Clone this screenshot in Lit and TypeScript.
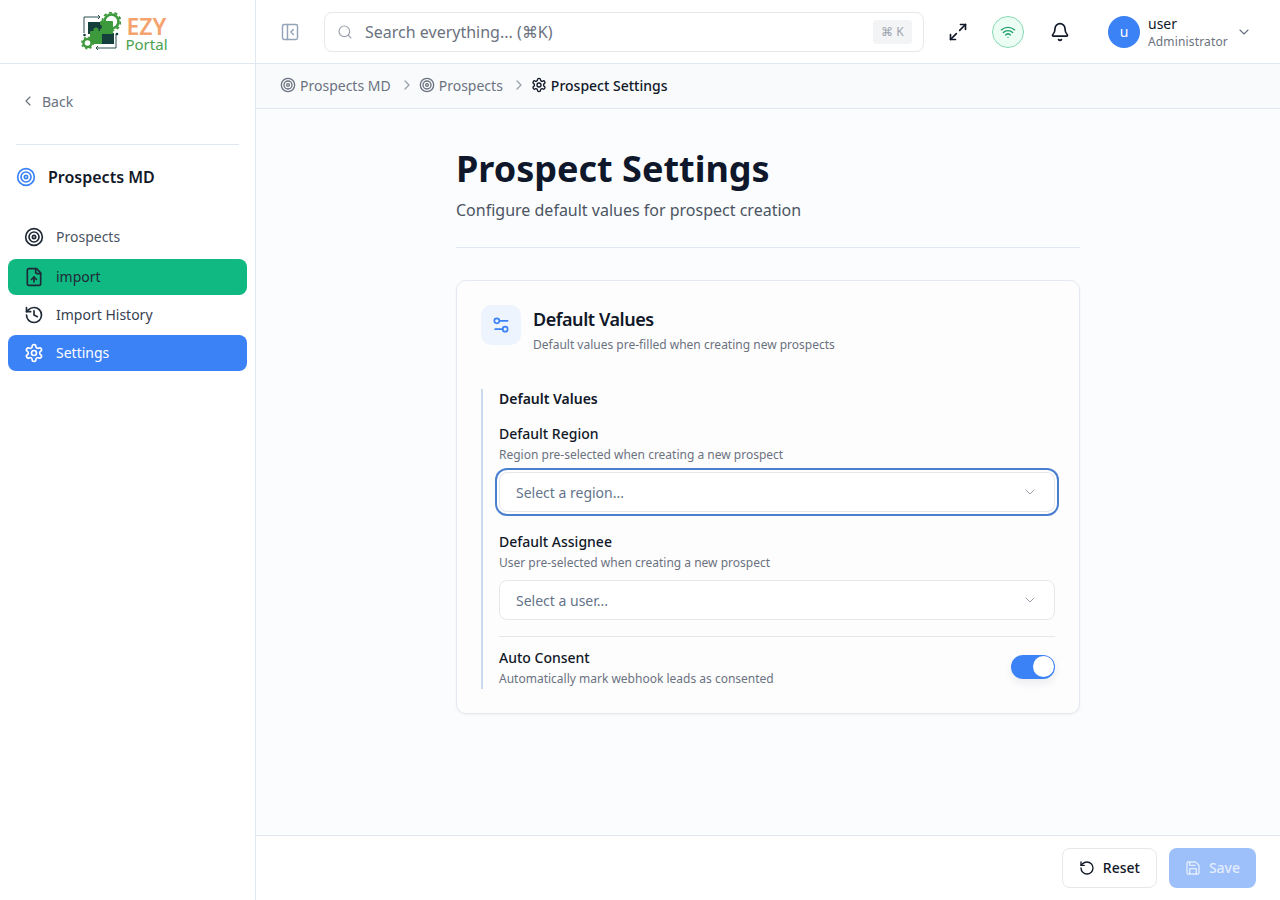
import { LitElement, html, svg, css } from 'lit';
import { customElement, state } from 'lit/decorators.js';

// lucide style icons, body only
const ICONS: Record<string, unknown> = {
  back: svg`<path d="m15 18-6-6 6-6"/>`,
  right: svg`<path d="m9 18 6-6-6-6"/>`,
  down: svg`<path d="m6 9 6 6 6-6"/>`,
  target: svg`<circle cx="12" cy="12" r="10"/><circle cx="12" cy="12" r="6"/><circle cx="12" cy="12" r="2"/>`,
  fileUp: svg`<path d="M15 2H6a2 2 0 0 0-2 2v16a2 2 0 0 0 2 2h12a2 2 0 0 0 2-2V7Z"/><path d="M14 2v4a2 2 0 0 0 2 2h4"/><path d="M12 12v6"/><path d="m15 15-3-3-3 3"/>`,
  history: svg`<path d="M3 12a9 9 0 1 0 9-9 9.75 9.75 0 0 0-6.74 2.74L3 8"/><path d="M3 3v5h5"/><path d="M12 7v5l4 2"/>`,
  settings: svg`<path d="M12.22 2h-.44a2 2 0 0 0-2 2v.18a2 2 0 0 1-1 1.73l-.43.25a2 2 0 0 1-2 0l-.15-.08a2 2 0 0 0-2.73.73l-.22.38a2 2 0 0 0 .73 2.73l.15.1a2 2 0 0 1 1 1.72v.51a2 2 0 0 1-1 1.74l-.15.09a2 2 0 0 0-.73 2.73l.22.38a2 2 0 0 0 2.73.73l.15-.08a2 2 0 0 1 2 0l.43.25a2 2 0 0 1 1 1.73V20a2 2 0 0 0 2 2h.44a2 2 0 0 0 2-2v-.18a2 2 0 0 1 1-1.73l.43-.25a2 2 0 0 1 2 0l.15.08a2 2 0 0 0 2.73-.73l.22-.39a2 2 0 0 0-.73-2.73l-.15-.08a2 2 0 0 1-1-1.74v-.5a2 2 0 0 1 1-1.74l.15-.09a2 2 0 0 0 .73-2.73l-.22-.38a2 2 0 0 0-2.73-.73l-.15.08a2 2 0 0 1-2 0l-.43-.25a2 2 0 0 1-1-1.73V4a2 2 0 0 0-2-2z"/><circle cx="12" cy="12" r="3"/>`,
  panel: svg`<rect x="3" y="3" width="18" height="18" rx="2"/><path d="M9 3v18"/><path d="m16 15-3-3 3-3"/>`,
  search: svg`<circle cx="11" cy="11" r="8"/><path d="m21 21-4.3-4.3"/>`,
  expand: svg`<path d="M15 3h6v6"/><path d="m21 3-7 7"/><path d="M9 21H3v-6"/><path d="m3 21 7-7"/>`,
  wifi: svg`<path d="M12 20h.01"/><path d="M2 8.82a15 15 0 0 1 20 0"/><path d="M5 12.859a10 10 0 0 1 14 0"/><path d="M8.5 16.429a5 5 0 0 1 7 0"/>`,
  bell: svg`<path d="M10.268 21a2 2 0 0 0 3.464 0"/><path d="M3.262 15.326A1 1 0 0 0 4 17h16a1 1 0 0 0 .74-1.673C19.41 13.956 18 12.499 18 8A6 6 0 0 0 6 8c0 4.499-1.411 5.956-2.738 7.326"/>`,
  sliders: svg`<path d="M20 7h-9"/><path d="M14 17H5"/><circle cx="17" cy="17" r="3"/><circle cx="7" cy="7" r="3"/>`,
  reset: svg`<path d="M3 12a9 9 0 1 0 9-9 9.75 9.75 0 0 0-6.74 2.74L3 8"/><path d="M3 3v5h5"/>`,
  save: svg`<path d="M15.2 3a2 2 0 0 1 1.4.6l3.8 3.8a2 2 0 0 1 .6 1.4V19a2 2 0 0 1-2 2H5a2 2 0 0 1-2-2V5a2 2 0 0 1 2-2z"/><path d="M17 21v-7a1 1 0 0 0-1-1H8a1 1 0 0 0-1 1v7"/><path d="M7 3v4a1 1 0 0 0 1 1h7"/>`,
};

function icon(name: string, size: number, sw = 2) {
  return html`<svg class="ic" width=${size} height=${size} viewBox="0 0 24 24" fill="none" stroke="currentColor"
    stroke-width=${sw} stroke-linecap="round" stroke-linejoin="round">${ICONS[name]}</svg>`;
}

const NAV = [
  { label: 'Prospects', icon: 'target', cls: 'soft' },
  { label: 'import', icon: 'fileUp', cls: 'green' },
  { label: 'Import History', icon: 'history', cls: '' },
  { label: 'Settings', icon: 'settings', cls: 'blue' },
];

@customElement('app-root')
export class AppRoot extends LitElement {
  @state() private autoConsent = true;

  static styles = css`
    :host {
      display: grid;
      grid-template-columns: 256px 1fr;
      width: 1280px;
      height: 900px;
      overflow: hidden;
      font-family: 'Noto Sans', sans-serif;
      color: #0f172a;
      background: #fff;
    }
    .ic { display: block; flex: none; }

    /* sidebar */
    .side { border-right: 1px solid #e2e8f0; display: flex; flex-direction: column; background: #fff; }
    .logo { height: 64px; box-sizing: border-box; border-bottom: 1px solid #e2e8f0; display: flex; align-items: center; justify-content: center; gap: 3px; padding-right: 6px; }
    .logo-text { display: flex; flex-direction: column; margin-top: 5px; }
    .ezy { font-size: 23px; font-weight: 600; color: #f4a36e; line-height: 20px; padding-left: 2px; }
    .portal { font-size: 15px; color: #4c9f50; line-height: 17px; padding-left: 1px; }
    .back { display: flex; align-items: center; gap: 6px; padding-left: 20px; height: 20px; margin-top: 27px; font-size: 14px; color: #6b7280; }
    .side hr { border: 0; border-top: 1px solid #e2e8f0; margin: 33px 16px 0; }
    .mod { display: flex; align-items: center; gap: 12px; padding-left: 16px; margin-top: 20px; height: 24px; font-size: 16px; font-weight: 600; color: #111827; }
    .mod .ic { color: #3b82f6; }
    nav { display: flex; flex-direction: column; gap: 2px; padding: 0 8px; margin-top: 30px; }
    .item { display: flex; align-items: center; gap: 12px; height: 36px; padding-left: 16px; border-radius: 8px; font-size: 14px; color: #374151; }
    .item span { margin-top: -2px; }
    .item .ic { color: #1f2937; }
    .item.soft { color: #4b5563; }
    .item.green { background: #10b981; margin-top: 2px; color: #1f2937; }
    .item.blue { background: #3b82f6; color: #fff; }
    .item.blue .ic { color: #fff; }

    /* right column */
    .main { display: flex; flex-direction: column; min-width: 0; background: #fbfcfd; }
    header { height: 64px; box-sizing: border-box; background: #fff; border-bottom: 1px solid #e2e8f0; display: flex; align-items: center; padding-left: 24px; }
    .toggle { color: #94a3b8; margin-right: 24px; }
    .search { width: 600px; height: 40px; box-sizing: border-box; border: 1px solid #e5e7eb; border-radius: 8px; display: flex; align-items: center; padding: 0 11px 0 12px; gap: 12px; font-size: 16px; color: #6b7280; }
    .search .ic { color: #9ca3af; }
    .search span { flex: 1; }
    .search kbd { font-family: inherit; font-size: 12px; color: #9ca3af; background: #f3f4f6; border-radius: 4px; height: 24px; padding: 0 8px; display: flex; align-items: center; letter-spacing: 0.25px; }
    .expand { margin-left: 24px; color: #111827; }
    .wifi { width: 32px; height: 32px; box-sizing: border-box; border-radius: 50%; margin-left: 24px; background: #ecfdf5; border: 1px solid #86d9b4; color: #22a06b; display: flex; align-items: center; justify-content: center; }
    .bell { margin-left: 26px; color: #111827; }
    .avatar { width: 32px; height: 32px; border-radius: 50%; background: #3b82f6; color: #fff; font-size: 14px; display: flex; align-items: center; justify-content: center; margin-left: 38px; }
    .who { margin-left: 8px; display: flex; flex-direction: column; }
    .who b { font-weight: 400; font-size: 14px; line-height: 18px; padding-top: 1px; color: #111827; }
    .who small { font-size: 12px; line-height: 17px; color: #6b7280; letter-spacing: 0.15px; }
    .caret { margin-left: 8px; color: #6b7280; }

    .crumbs { height: 45px; box-sizing: border-box; border-bottom: 1px solid #e2e8f0; background: #f8fafc; display: flex; align-items: center; padding: 0 0 2px 24px; font-size: 14px; color: #6b7280; }
    .crumb { display: flex; align-items: center; gap: 4px; }
    .crumb.now { color: #111827; font-weight: 500; }
    .sep { margin: 0 4px 0 8px; color: #9ca3af; }

    .scroll { flex: 1; min-height: 0; display: flex; justify-content: center; padding-top: 36px; }
    .page { width: 624px; }
    h1 { margin: 0; font-size: 36px; line-height: 48px; font-weight: 700; color: #0f172a; }
    .sub { margin: 5px 0 0; font-size: 16px; line-height: 24px; color: #4b5563; }
    .page > hr { border: 0; border-top: 1px solid #e2e8f0; margin: 25px 0 32px; }

    .card { box-sizing: border-box; height: 434px; border: 1px solid #e5e9f0; border-radius: 10px; background: #fdfdfe; box-shadow: 0 1px 3px rgba(15, 23, 42, 0.05); padding: 24px; }
    .card-head { display: flex; gap: 12px; }
    .badge { width: 40px; height: 40px; border-radius: 10px; background: #eef4fe; color: #3b82f6; display: flex; align-items: center; justify-content: center; }
    .card-head h2 { margin: 2px 0 0; font-size: 18px; line-height: 24px; font-weight: 600; letter-spacing: -0.45px; color: #111827; }
    .card-head p { margin: 6px 0 0; font-size: 12px; line-height: 16px; color: #6b7280; }

    .group { margin-top: 36px; height: 300px; box-sizing: border-box; border-left: 2px solid #cbd9ee; padding-left: 16px; display: flex; flex-direction: column; }
    .group h3 { margin: 0; font-size: 14px; line-height: 20px; font-weight: 600; color: #111827; }
    .label { font-size: 14px; line-height: 20px; font-weight: 500; color: #111827; }
    .help { font-size: 12px; line-height: 16px; margin-top: 3px; color: #6b7280; }
    .field-a { margin-top: 15px; }
    .field-b { margin-top: 20px; }
    .select { height: 40px; box-sizing: border-box; background: #fff; border: 1px solid #e5e7eb; border-radius: 8px; display: flex; align-items: center; justify-content: space-between; padding: 0 16px; font-size: 14px; color: #64748b; margin-top: 9px; }
    .select .ic { color: #9ca3af; }
    .select.focus { box-shadow: 0 0 0 2px #fff, 0 0 0 4px #4a7fd0; }
    .row { border-top: 1px solid #e5e7eb; margin-top: 16px; padding-top: 11px; display: flex; align-items: center; justify-content: space-between; }
    .switch { width: 44px; height: 24px; padding: 0; margin-top: -2px; border: 0; border-radius: 12px; background: #3b82f6; display: flex; align-items: center; cursor: pointer; box-shadow: 0 4px 8px rgba(15, 23, 42, 0.08); }
    .switch i { display: block; width: 21px; height: 21px; border-radius: 50%; background: #fff; margin-left: 22px; }
    .switch.off { background: #cbd5e1; }
    .switch.off i { margin-left: 2px; }

    footer { height: 65px; box-sizing: border-box; background: #fff; border-top: 1px solid #e2e8f0; display: flex; align-items: center; justify-content: flex-end; gap: 12px; padding-right: 24px; }
    button.btn { height: 40px; box-sizing: border-box; border-radius: 8px; font: 500 14px 'Noto Sans', sans-serif; display: flex; align-items: center; gap: 8px; padding: 0 16px; }
    button.btn span { margin-top: -2px; }
    .reset { background: #fff; border: 1px solid #e5e7eb; color: #111827; }
    .save { background: #9dbffa; border: 0; color: #e3edfd; }
  `;

  private logo() {
    return html`<svg class="ic" width="40" height="40" viewBox="0 0 40 40" fill="none">
      <path d="M3 21V5h16M17 3l2 2-2 2" stroke="#2a4f4c" stroke-width="1" />
      <path d="M35 22v14H15M17 34l-2 2 2 2" stroke="#2a4f4c" stroke-width="1" />
      <circle cx="3.5" cy="23" r="1.3" fill="#143f3c" />
      <circle cx="36" cy="22" r="1.3" fill="#143f3c" />
      <rect x="7" y="10" width="13" height="12" fill="#143f3c" />
      <rect x="19" y="21" width="14" height="11" fill="#143f3c" />
      <circle cx="30.5" cy="9.5" r="7" stroke="#3d9a3c" stroke-width="2.6" />
      <circle cx="30.5" cy="9.5" r="9" stroke="#3d9a3c" stroke-width="2" stroke-dasharray="3 2.65" />
      <rect x="19" y="9" width="13" height="13" rx="1" fill="#3d9a3c" />
      <circle cx="18.5" cy="15" r="2.4" fill="#143f3c" />
      <rect x="9" y="19" width="12" height="13" rx="1" fill="#3d9a3c" />
      <circle cx="15" cy="18" r="2.6" fill="#3d9a3c" />
      <circle cx="6.5" cy="31" r="4" fill="#fff" stroke="#3d9a3c" stroke-width="2.4" />
      <circle cx="6.5" cy="31" r="5.6" stroke="#3d9a3c" stroke-width="1.8" stroke-dasharray="2 2.4" />
    </svg>`;
  }

  render() {
    return html`
      <aside class="side">
        <div class="logo">
          ${this.logo()}
          <div class="logo-text"><span class="ezy">EZY</span><span class="portal">Portal</span></div>
        </div>
        <div class="back">${icon('back', 16, 1.75)}<span>Back</span></div>
        <hr />
        <div class="mod">${icon('target', 20)}<span>Prospects MD</span></div>
        <nav>
          ${NAV.map(
            (n) => html`<div class="item ${n.cls}">${icon(n.icon, 20)}<span>${n.label}</span></div>`
          )}
        </nav>
      </aside>
      <div class="main">
        <header>
          <span class="toggle">${icon('panel', 20, 1.75)}</span>
          <div class="search">
            ${icon('search', 16, 1.75)}
            <span>Search everything... (⌘K)</span>
            <kbd>⌘ K</kbd>
          </div>
          <span class="expand">${icon('expand', 20)}</span>
          <span class="wifi">${icon('wifi', 16)}</span>
          <span class="bell">${icon('bell', 20)}</span>
          <span class="avatar">u</span>
          <div class="who"><b>user</b><small>Administrator</small></div>
          <span class="caret">${icon('down', 16, 1.75)}</span>
        </header>
        <div class="crumbs">
          <span class="crumb">${icon('target', 16)}Prospects MD</span>
          <span class="sep">${icon('right', 16, 2)}</span>
          <span class="crumb">${icon('target', 16)}Prospects</span>
          <span class="sep">${icon('right', 16, 2)}</span>
          <span class="crumb now">${icon('settings', 16)}Prospect Settings</span>
        </div>
        <div class="scroll">
          <div class="page">
            <h1>Prospect Settings</h1>
            <p class="sub">Configure default values for prospect creation</p>
            <hr />
            <section class="card">
              <div class="card-head">
                <div class="badge">${icon('sliders', 20)}</div>
                <div>
                  <h2>Default Values</h2>
                  <p>Default values pre-filled when creating new prospects</p>
                </div>
              </div>
              <div class="group">
                <h3>Default Values</h3>
                <div class="field-a">
                  <div class="label">Default Region</div>
                  <div class="help">Region pre-selected when creating a new prospect</div>
                  <div class="select focus"><span>Select a region...</span>${icon('down', 16, 1.5)}</div>
                </div>
                <div class="field-b">
                  <div class="label">Default Assignee</div>
                  <div class="help">User pre-selected when creating a new prospect</div>
                  <div class="select"><span>Select a user...</span>${icon('down', 16, 1.5)}</div>
                </div>
                <div class="row">
                  <div>
                    <div class="label">Auto Consent</div>
                    <div class="help">Automatically mark webhook leads as consented</div>
                  </div>
                  <button
                    class="switch ${this.autoConsent ? '' : 'off'}"
                    @click=${() => (this.autoConsent = !this.autoConsent)}
                  ><i></i></button>
                </div>
              </div>
            </section>
          </div>
        </div>
        <footer>
          <button class="btn reset">${icon('reset', 16)}<span>Reset</span></button>
          <button class="btn save">${icon('save', 16)}<span>Save</span></button>
        </footer>
      </div>
    `;
  }
}
